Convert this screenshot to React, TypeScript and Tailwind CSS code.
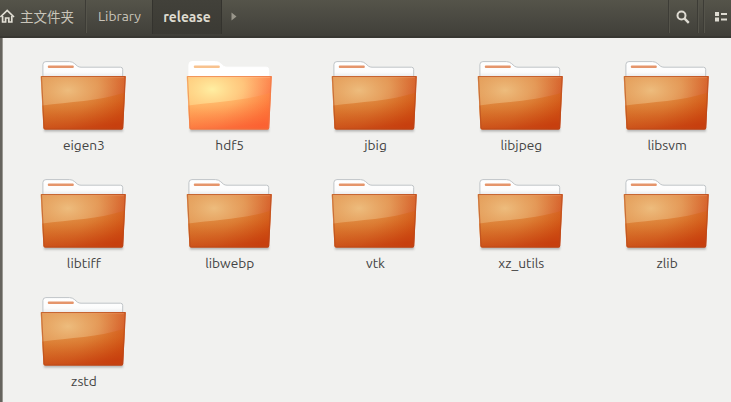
type FolderProps = { name: string; bright?: boolean };

const folders: FolderProps[] = [
  { name: "eigen3" },
  { name: "hdf5", bright: true },
  { name: "jbig" },
  { name: "libjpeg" },
  { name: "libsvm" },
  { name: "libtiff" },
  { name: "libwebp" },
  { name: "vtk" },
  { name: "xz_utils" },
  { name: "zlib" },
  { name: "zstd" },
];

function Gradients() {
  return (
    <svg width="0" height="0" className="absolute">
      <defs>
        <linearGradient id="base" x1="0" y1="0.2" x2="1" y2="0.6">
          <stop offset="0" stopColor="#e08e4a" />
          <stop offset="0.55" stopColor="#df8040" />
          <stop offset="1" stopColor="#d04a1c" />
        </linearGradient>
        <linearGradient id="baseBright" x1="0" y1="0.2" x2="1" y2="0.6">
          <stop offset="0" stopColor="#ffbd6c" />
          <stop offset="0.55" stopColor="#ffa866" />
          <stop offset="1" stopColor="#fc693a" />
        </linearGradient>
        <radialGradient id="glow" cx="0.32" cy="0.26" r="0.75">
          <stop offset="0" stopColor="#eebf80" stopOpacity="0.95" />
          <stop offset="0.5" stopColor="#e8ab68" stopOpacity="0.6" />
          <stop offset="1" stopColor="#e08a48" stopOpacity="0" />
        </radialGradient>
        <radialGradient id="glowBright" cx="0.3" cy="0.24" r="0.75">
          <stop offset="0" stopColor="#ffefa2" />
          <stop offset="0.5" stopColor="#ffd588" stopOpacity="0.65" />
          <stop offset="1" stopColor="#ffa868" stopOpacity="0" />
        </radialGradient>
        <linearGradient id="lower" x1="0" y1="0" x2="0.2" y2="1">
          <stop offset="0" stopColor="#d86a14" stopOpacity="0.32" />
          <stop offset="0.4" stopColor="#d4600f" stopOpacity="0.5" />
          <stop offset="1" stopColor="#c43c0a" stopOpacity="0.75" />
        </linearGradient>
        <linearGradient id="lowerBright" x1="0" y1="0" x2="0.2" y2="1">
          <stop offset="0" stopColor="#ff9840" stopOpacity="0.25" />
          <stop offset="0.4" stopColor="#ff8a3a" stopOpacity="0.42" />
          <stop offset="1" stopColor="#fb6030" stopOpacity="0.75" />
        </linearGradient>
        <linearGradient id="paper" x1="0" y1="0" x2="0" y2="1">
          <stop offset="0" stopColor="#ffffff" />
          <stop offset="0.6" stopColor="#fcfcfc" />
          <stop offset="1" stopColor="#dfe2e5" />
        </linearGradient>
        <filter id="soft" x="-10%" y="-100%" width="120%" height="300%">
          <feGaussianBlur stdDeviation="1" />
        </filter>
      </defs>
    </svg>
  );
}

function FolderIcon({ bright }: { bright?: boolean }) {
  return (
    <svg width="90" height="74" viewBox="0 0 90 74" className="block">
      <rect x="5" y="67.5" width="79" height="4" fill="#777" opacity="0.5" filter="url(#soft)" />
      <path
        d="M3.9 19V4.6Q3.9 1.6 6.9 1.6H30.5Q33.5 1.6 35.7 3.7L38.5 6.2Q40 7.2 42 7.2H81.5Q83.7 7.2 83.7 9.5V19Z"
        fill={bright ? "#ffffff" : "url(#paper)"}
        stroke={bright ? "#ffffff" : "#bfc4c7"}
      />
      <rect x="8.8" y="5.4" width="26" height="2.6" rx="1" fill={bright ? "#f8c28e" : "#e5956b"} />
      <path
        d="M2.2 16H86.4Q87 16 86.9 17L84.2 68Q84 69.6 82.4 69.6H6.2Q4.6 69.6 4.4 68L1.7 17Q1.6 16 2.2 16Z"
        fill={bright ? "url(#baseBright)" : "url(#base)"}
      />
      <path
        d="M1.7 16.5H86.9L84.2 68Q84 69.6 82.4 69.6H6.2Q4.6 69.6 4.4 68Z"
        fill={bright ? "url(#glowBright)" : "url(#glow)"}
      />
      <path
        d="M3.2 45.5C30 42 60 41 86 32.5L84.2 68Q84 69.6 82.4 69.6H6.2Q4.6 69.6 4.4 68Z"
        fill={bright ? "url(#lowerBright)" : "url(#lower)"}
      />
      <path
        d="M2.5 16.5H86.1L83.5 68Q83.4 69.1 82 69.1H6.6Q5.3 69.1 5.1 68Z"
        fill="none"
        stroke={bright ? "#ea7848" : "#b4481c"}
        strokeOpacity="0.6"
      />
      <path d="M3.8 17.6H84.9" stroke={bright ? "#ffc490" : "#e89a68"} strokeOpacity="0.4" />
    </svg>
  );
}

function Folder({ name, bright }: FolderProps) {
  return (
    <div className="flex h-[118px] flex-col items-center">
      <FolderIcon bright={bright} />
      <span className="mt-[2px] text-[13.7px] leading-[18px] text-[#434342]">{name}</span>
    </div>
  );
}

function Separator() {
  return <div className="h-[33px] w-[2px] border-l border-[#3d3c36] bg-[#55544b]" />;
}

export default function App() {
  return (
    <div className="flex h-[402px] w-[731px] flex-col overflow-hidden bg-[#f1f1ef] font-['Ubuntu','Noto_Sans','Noto_Sans_CJK_SC',sans-serif]">
      <Gradients />
      <header className="flex h-[38px] shrink-0 items-start border-b-2 border-[#383732] bg-linear-to-b from-[#55544a] to-[#403f39] text-[13.8px] text-[#c9c5ba]">
        <div className="flex h-[33px] w-[85px] items-center">
          <svg width="15" height="15" viewBox="0 0 15 15" className="block shrink-0">
            <path d="M0.4 8L7.2 1.5L14 8" fill="none" stroke="#e2dfd5" strokeWidth="1.7" />
            <path d="M2.6 7V13H5.6V9H8.8V13H11.8V7" fill="none" stroke="#e2dfd5" strokeWidth="1.7" />
          </svg>
          <span className="mt-[2px] ml-[5px] text-[13.5px] whitespace-nowrap">主文件夹</span>
        </div>
        <Separator />
        <div className="flex h-[33px] w-[65px] items-center justify-center">Library</div>
        <div className="flex h-[34px] w-[70px] items-center justify-center border-x border-[#34332e] bg-linear-to-b from-[#42413a] to-[#3b3a34] font-bold text-[#dedbd0]">
          release
        </div>
        <div className="flex h-[33px] w-[24px] items-center justify-center">
          <svg width="6" height="9" viewBox="0 0 6 9">
            <path d="M0.5 0.5L5.5 4.5L0.5 8.5Z" fill="#99968b" />
          </svg>
        </div>
        <div className="flex-1" />
        <Separator />
        <div className="flex h-[33px] w-[27px] items-center justify-center pr-[1px]">
          <svg width="14" height="14" viewBox="0 0 14 14">
            <circle cx="5.5" cy="5.5" r="4" fill="none" stroke="#dedbd2" strokeWidth="2" />
            <path d="M8.6 8.6L12.8 12.8" stroke="#dedbd2" strokeWidth="2.4" />
          </svg>
        </div>
        <Separator />
        <div className="w-[4px]" />
        <Separator />
        <div className="flex h-[33px] w-[26px] items-center pl-[10px]">
          <svg width="13" height="11" viewBox="0 0 13 11" fill="#dedbd2">
            <path d="M0 1h4v4H0zM0 6.5h4v4H0zM6 2h6v2H6zM6 7.5h6v2H6z" />
          </svg>
        </div>
      </header>
      <div className="flex min-h-0 flex-1">
        <div className="w-[3px] shrink-0 border-r border-[#9a9892] bg-[#66645e]" />
        <main className="grid shrink-0 grid-cols-[repeat(5,145.8px)] content-start pt-[22px] pl-[8px]">
          {folders.map((f) => (
            <Folder key={f.name} {...f} />
          ))}
        </main>
      </div>
    </div>
  );
}
